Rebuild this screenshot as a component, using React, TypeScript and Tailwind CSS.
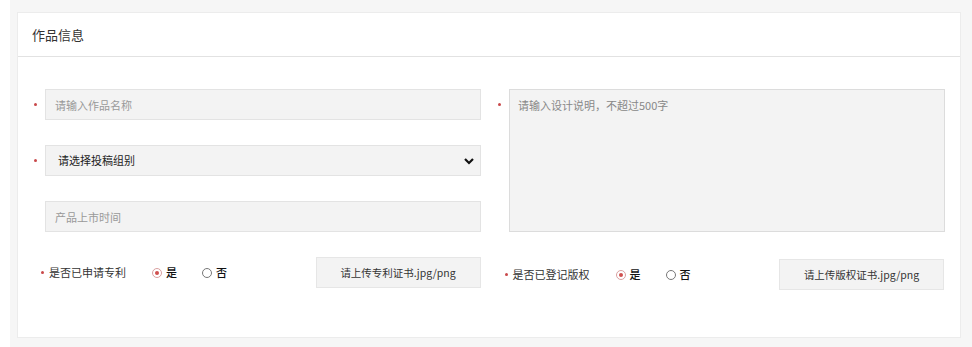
import React from "react";

const font = { fontFamily: '"Noto Sans CJK SC", "Noto Sans", sans-serif' };

function Star() {
  return <span className="inline-block w-[3px] h-[3px] rounded-full bg-[#c9484a]" />;
}

function Radio({ checked, label }: { checked?: boolean; label: string }) {
  return (
    <label className="flex items-center gap-[4px] text-[11px] text-[#111] font-medium">
      <span
        className={`w-[10px] h-[10px] rounded-full border flex items-center justify-center ${
          checked ? "border-[#d9a0a0]" : "border-[#777]"
        }`}
      >
        {checked && <span className="w-[4px] h-[4px] rounded-full bg-[#d0504f]" />}
      </span>
      {label}
    </label>
  );
}

function ChoiceRow({
  label,
  upload,
  offset,
}: {
  label: string;
  upload: string;
  offset: string;
}) {
  return (
    <div className={`flex items-center ${offset}`}>
      <div className="flex items-center gap-[5px] text-[11px] text-[#333] w-[111px]">
        <Star />
        <span>{label}</span>
      </div>
      <div className="flex items-center gap-[25px]">
        <Radio checked label="是" />
        <Radio label="否" />
      </div>
      <button className="ml-auto w-[165px] h-[31px] bg-[#f3f3f3] border border-[#e6e6e6] text-[10.5px] text-[#333]">
        {upload}
      </button>
    </div>
  );
}

export default function App() {
  return (
    <div className="w-[972px] h-[347px] bg-white overflow-hidden" style={font}>
      <div className="ml-[10px] h-full bg-[#f6f6f6] pl-[7px] pr-[11px] pt-[12px]">
        <div className="bg-white border border-[#ececec] h-[326px]">
          {/* 标题 */}
          <div className="h-[44px] flex items-center px-[14px] border-b border-[#e2e2e2] text-[13px] text-[#333]">
            作品信息
          </div>

          <div className="pt-[32px] pl-[14px] pr-[16px]">
            <div className="flex gap-[14px]">
              {/* 左列 */}
              <div className="w-[449px] flex flex-col gap-[25px]">
                <div className="flex items-center">
                  <div className="w-[13px] pl-[2px] flex"><Star /></div>
                  <input
                    className="w-[436px] h-[31px] bg-[#f3f3f3] border border-[#e3e3e3] px-[9px] text-[11px] placeholder:text-[#999] outline-none"
                    placeholder="请输入作品名称"
                  />
                </div>
                <div className="flex items-center">
                  <div className="w-[13px] pl-[2px] flex"><Star /></div>
                  <div className="w-[436px] h-[31px] bg-[#f3f3f3] border border-[#e3e3e3] pl-[12px] pr-[5px] flex items-center justify-between text-[11px] text-[#222]">
                    <span>请选择投稿组别</span>
                    <svg width="12" height="12" viewBox="0 0 12 12">
                      <path d="M2 4 L6 8 L10 4" fill="none" stroke="#111" strokeWidth="2.2" />
                    </svg>
                  </div>
                </div>
                <div className="flex items-center">
                  <div className="w-[13px]" />
                  <input
                    className="w-[436px] h-[31px] bg-[#f3f3f3] border border-[#e3e3e3] px-[9px] text-[11px] placeholder:text-[#999] outline-none"
                    placeholder="产品上市时间"
                  />
                </div>
              </div>

              {/* 右列 */}
              <div className="w-[450px] flex items-start">
                <div className="w-[14px] pt-[14px] pl-[3px] flex"><Star /></div>
                <textarea
                  className="w-[436px] h-[143px] bg-[#f3f3f3] border border-[#dcdcdc] px-[8px] py-[7px] text-[11px] placeholder:text-[#888] outline-none resize-none"
                  placeholder="请输入设计说明，不超过500字"
                />
              </div>
            </div>

            {/* 底部 */}
            <div className="flex gap-[14px] mt-[25px]">
              <div className="w-[449px]">
                <ChoiceRow label="是否已申请专利" upload="请上传专利证书.jpg/png" offset="pl-[9px]" />
              </div>
              <div className="w-[450px] mt-[2px]">
                <ChoiceRow label="是否已登记版权" upload="请上传版权证书.jpg/png" offset="pl-[10px]" />
              </div>
            </div>
          </div>
        </div>
      </div>
    </div>
  );
}
